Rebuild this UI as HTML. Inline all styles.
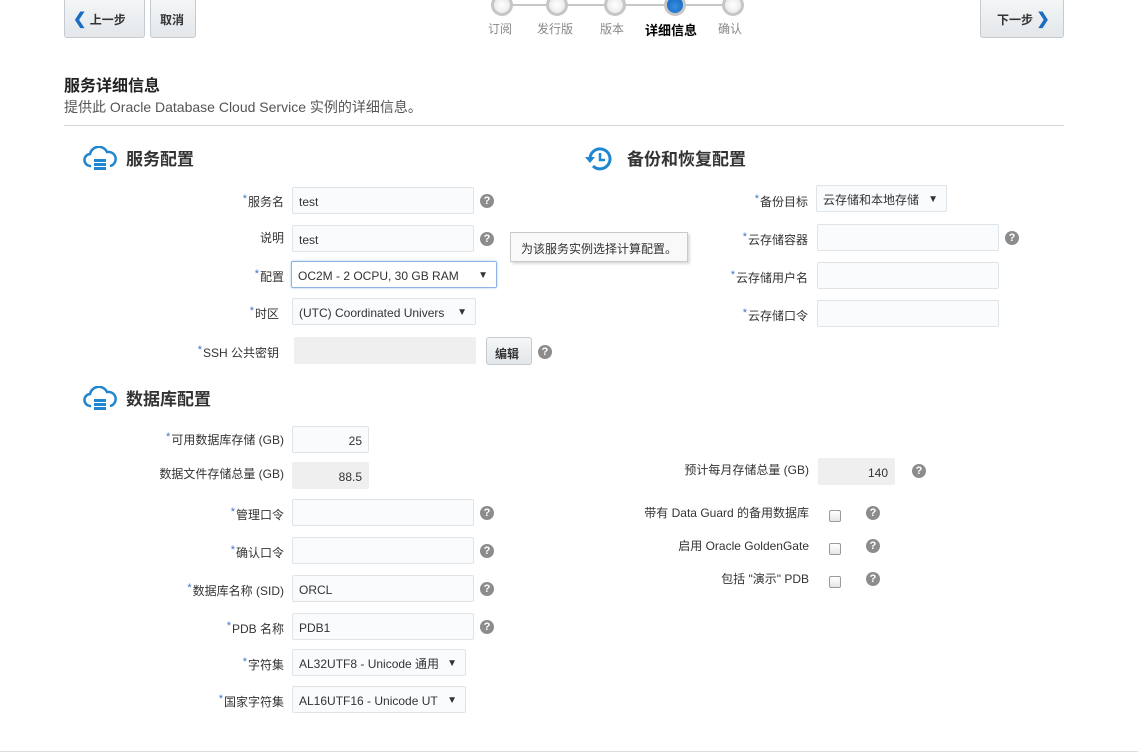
<!DOCTYPE html><html><head><meta charset="utf-8"><style>
*{box-sizing:border-box}
body{margin:0;width:1138px;height:753px;background:#fff;font-family:"Liberation Sans","Noto Sans CJK SC",sans-serif;font-size:12px;color:#333;position:relative;overflow:hidden}
.a{position:absolute}
.btn{position:absolute;background:linear-gradient(#f4f6f7,#e3e7ea);border:1px solid #c4ccd2;border-radius:0 0 3px 3px;font-weight:bold;color:#333;font-size:12px}
.lbl{position:absolute;text-align:right;white-space:nowrap;font-size:12px;color:#333;line-height:14px;margin-top:-2px}
.lbl b{color:#3a76c6;font-weight:normal;font-size:11px;vertical-align:4px;margin-right:1px}
.in{position:absolute;height:27px;border:1px solid #dfe4e8;border-radius:2px;background:#f9fbfd;padding:2px 6px 0;line-height:25px;font-size:12px;color:#333}
.ro{background:#efefef;border-color:#efefef;text-align:right}
.sel:after{content:"▼";position:absolute;right:8px;top:1px;font-size:10px}
.q{position:absolute;width:14px;height:14px;border-radius:50%;background:#8c8c8c;color:#fff;font-size:11px;font-weight:bold;text-align:center;line-height:14px}
.cb{position:absolute;width:12px;height:12px;border:1px solid #9a9a9a;border-radius:2px;background:linear-gradient(#fff,#e6e6e6)}
.dot{position:absolute;width:22px;height:22px;border-radius:50%;background:radial-gradient(#fff,#e3e3e3);border:3px solid #c6c6c6;top:-6px}
.step{position:absolute;top:20px;font-size:12px;color:#888}
h2{position:absolute;margin:0;font-size:17px;font-weight:bold;color:#333}
</style></head><body>
<div class="btn" style="left:64px;top:-2px;width:81px;height:40px;padding:10px 0 0 8px"><span style="color:#1a6ec2;font-size:16px">&#10094;</span> 上一步</div>
<div class="btn" style="left:150px;top:-2px;width:46px;height:40px;padding:12px 0 0 9px">取消</div>
<div class="btn" style="left:980px;top:-2px;width:84px;height:40px;padding:10px 0 0 16px">下一步 <span style="color:#1a6ec2;font-size:16px">&#10095;</span></div>
<div class="a" style="left:510px;top:4px;width:222px;height:2px;background:#c6c6c6"></div>
<div class="dot" style="left:491px"></div><div class="dot" style="left:546px"></div><div class="dot" style="left:604px"></div>
<div class="dot" style="left:664px;background:radial-gradient(circle at 50% 60%,#3a8fe0,#0b5fbf);border-color:#c6c6c6"></div>
<div class="dot" style="left:722px"></div>
<div class="step" style="left:488px">订阅</div><div class="step" style="left:537px">发行版</div><div class="step" style="left:600px">版本</div>
<div class="step" style="left:645px;color:#000;font-weight:bold;font-size:13px">详细信息</div><div class="step" style="left:718px">确认</div>
<div class="a" style="left:64px;top:72px;font-size:16px;font-weight:bold;color:#222">服务详细信息</div>
<div class="a" style="left:64px;top:97px;font-size:14px;color:#555">提供此 Oracle Database Cloud Service 实例的详细信息。</div>
<div class="a" style="left:64px;top:125px;width:1000px;height:1px;background:#d6d6d6"></div>
<svg class="a" style="left:83px;top:146px" width="34" height="28" viewBox="0 0 34 28"><path d="M8 20 A6 6 0 0 1 7 8 A9 9 0 0 1 24 6 A7 7 0 0 1 27 20" fill="none" stroke="#1f86d0" stroke-width="2.5"/><rect x="11" y="13" width="12" height="3" fill="#1f86d0"/><rect x="11" y="17" width="12" height="3" fill="#1f86d0"/><rect x="11" y="21" width="12" height="3" fill="#1f86d0"/></svg>
<h2 style="left:126px;top:145px">服务配置</h2>
<svg class="a" style="left:83px;top:386px" width="34" height="28" viewBox="0 0 34 28"><path d="M8 20 A6 6 0 0 1 7 8 A9 9 0 0 1 24 6 A7 7 0 0 1 27 20" fill="none" stroke="#1f86d0" stroke-width="2.5"/><rect x="11" y="13" width="12" height="3" fill="#1f86d0"/><rect x="11" y="17" width="12" height="3" fill="#1f86d0"/><rect x="11" y="21" width="12" height="3" fill="#1f86d0"/></svg>
<h2 style="left:126px;top:385px">数据库配置</h2>
<svg class="a" style="left:584px;top:144px" width="32" height="30" viewBox="0 0 32 30"><path d="M6 15 A10 10 0 1 1 9 22" fill="none" stroke="#1f86d0" stroke-width="3"/><path d="M1 13 L11 13 L6 19Z" fill="#1f86d0"/><path d="M16 9 V16 H21" fill="none" stroke="#1f86d0" stroke-width="2.5"/></svg>
<h2 style="left:627px;top:145px">备份和恢复配置</h2>

<div class="lbl" style="right:854px;top:194px"><b>*</b>服务名</div><div class="in" style="left:292px;top:187px;width:182px">test</div><div class="q" style="left:480px;top:194px">?</div>
<div class="lbl" style="right:854px;top:233px">说明</div><div class="in" style="left:292px;top:225px;width:182px">test</div><div class="q" style="left:480px;top:232px">?</div>
<div class="lbl" style="right:854px;top:269px"><b>*</b>配置</div><div class="in sel" style="left:291px;top:261px;width:206px;border-color:#8db4e8;background:#fff;box-shadow:0 0 2px #aac8f0">OC2M - 2 OCPU, 30 GB RAM</div>
<div class="a" style="left:510px;top:232px;width:178px;height:30px;border:1px solid #c9c9c9;background:#f9f9f9;box-shadow:2px 2px 2px #ddd;padding:7px 10px;font-size:12px">为该服务实例选择计算配置。</div>
<div class="lbl" style="right:859px;top:306px"><b>*</b>时区</div><div class="in sel" style="left:292px;top:298px;width:184px">(UTC) Coordinated Univers</div>
<div class="lbl" style="right:859px;top:345px"><b>*</b>SSH 公共密钥</div><div class="in ro" style="left:294px;top:337px;width:182px"></div>
<div class="btn" style="left:486px;top:337px;width:46px;height:28px;border-radius:3px;padding:7px 0 0 8px">编辑</div><div class="q" style="left:538px;top:345px">?</div>

<div class="lbl" style="right:330px;top:194px"><b>*</b>备份目标</div><div class="in sel" style="left:816px;top:185px;width:131px">云存储和本地存储</div>
<div class="lbl" style="right:330px;top:232px"><b>*</b>云存储容器</div><div class="in" style="left:817px;top:224px;width:182px"></div><div class="q" style="left:1005px;top:231px">?</div>
<div class="lbl" style="right:330px;top:270px"><b>*</b>云存储用户名</div><div class="in" style="left:817px;top:262px;width:182px"></div>
<div class="lbl" style="right:330px;top:308px"><b>*</b>云存储口令</div><div class="in" style="left:817px;top:300px;width:182px"></div>

<div class="lbl" style="right:854px;top:432px"><b>*</b>可用数据库存储 (GB)</div><div class="in" style="left:292px;top:426px;width:77px;text-align:right">25</div>
<div class="lbl" style="right:854px;top:469px">数据文件存储总量 (GB)</div><div class="in ro" style="left:292px;top:462px;width:77px">88.5</div>
<div class="lbl" style="right:854px;top:507px"><b>*</b>管理口令</div><div class="in" style="left:292px;top:499px;width:182px"></div><div class="q" style="left:480px;top:506px">?</div>
<div class="lbl" style="right:854px;top:545px"><b>*</b>确认口令</div><div class="in" style="left:292px;top:537px;width:182px"></div><div class="q" style="left:480px;top:544px">?</div>
<div class="lbl" style="right:854px;top:583px"><b>*</b>数据库名称 (SID)</div><div class="in" style="left:292px;top:575px;width:182px">ORCL</div><div class="q" style="left:480px;top:582px">?</div>
<div class="lbl" style="right:854px;top:621px"><b>*</b>PDB 名称</div><div class="in" style="left:292px;top:613px;width:182px">PDB1</div><div class="q" style="left:480px;top:620px">?</div>
<div class="lbl" style="right:854px;top:657px"><b>*</b>字符集</div><div class="in sel" style="left:292px;top:649px;width:174px">AL32UTF8 - Unicode 通用</div>
<div class="lbl" style="right:854px;top:694px"><b>*</b>国家字符集</div><div class="in sel" style="left:292px;top:686px;width:174px">AL16UTF16 - Unicode UT</div>

<div class="lbl" style="right:329px;top:465px">预计每月存储总量 (GB)</div><div class="in ro" style="left:818px;top:458px;width:77px">140</div><div class="q" style="left:912px;top:464px">?</div>
<div class="lbl" style="right:329px;top:508px">带有 Data Guard 的备用数据库</div><div class="cb" style="left:829px;top:510px"></div><div class="q" style="left:866px;top:506px">?</div>
<div class="lbl" style="right:329px;top:541px">启用 Oracle GoldenGate</div><div class="cb" style="left:829px;top:543px"></div><div class="q" style="left:866px;top:539px">?</div>
<div class="lbl" style="right:329px;top:574px">包括 "演示" PDB</div><div class="cb" style="left:829px;top:576px"></div><div class="q" style="left:866px;top:572px">?</div>
<div class="a" style="left:0;top:751px;width:1138px;height:1px;background:#ddd"></div>
</body></html>
